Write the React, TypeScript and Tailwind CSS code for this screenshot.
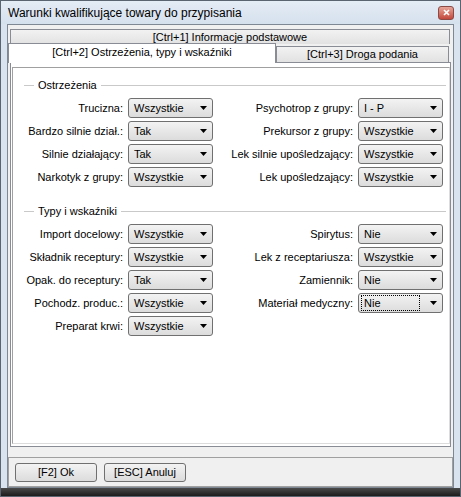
import React from "react";

const rowsA: [string, string, string, string][] = [
  ["Trucizna:", "Wszystkie", "Psychotrop z grupy:", "I - P"],
  ["Bardzo silnie dział.:", "Tak", "Prekursor z grupy:", "Wszystkie"],
  ["Silnie działający:", "Tak", "Lek silnie upośledzający:", "Wszystkie"],
  ["Narkotyk z grupy:", "Wszystkie", "Lek upośledzający:", "Wszystkie"],
];

const rowsB: [string, string, string?, string?][] = [
  ["Import docelowy:", "Wszystkie", "Spirytus:", "Nie"],
  ["Składnik receptury:", "Wszystkie", "Lek z receptariusza:", "Wszystkie"],
  ["Opak. do receptury:", "Tak", "Zamiennik:", "Nie"],
  ["Pochodz. produc.:", "Wszystkie", "Materiał medyczny:", "Nie"],
  ["Preparat krwi:", "Wszystkie"],
];

function Combo({ value, focus }: { value: string; focus?: boolean }) {
  return (
    <div className="w-[85px] h-[20px] rounded-[3px] border border-[#707070] bg-linear-to-b from-[#f3f3f3] to-[#dcdcdc] flex items-center pl-[2px] pr-[5px]">
      <span
        className={`flex-1 h-[16px] leading-[14px] pl-[2px] ${
          focus ? "border border-dotted border-black mr-[10px]" : "border border-transparent"
        }`}
      >
        {value}
      </span>
      <svg width="7" height="4" viewBox="0 0 7 4">
        <path d="M0 0h7L3.5 4z" fill="#000" />
      </svg>
    </div>
  );
}

function GroupHeader({ title }: { title: string }) {
  return (
    <div className="flex items-center h-[13px]">
      <div className="ml-[11px] w-[10px] border-t border-[#c9c9c9]" />
      <span className="px-[4px] leading-[13px]">{title}</span>
      <div className="flex-1 mr-[3px] border-t border-[#c9c9c9]" />
    </div>
  );
}

function Row({ l1, v1, l2, v2, focus }: { l1: string; v1: string; l2?: string; v2?: string; focus?: boolean }) {
  return (
    <div className="flex items-center">
      <span className="w-[110px] mr-[5px] text-right whitespace-nowrap">{l1}</span>
      <Combo value={v1} />
      {l2 && (
        <>
          <span className="w-[140px] mr-[5px] text-right whitespace-nowrap">{l2}</span>
          <Combo value={v2 || ""} focus={focus} />
        </>
      )}
    </div>
  );
}

export default function App() {
  return (
    <div className="w-[461px] h-[497px] flex flex-col bg-[#d8e3ef] border border-[#5a6470] font-['Liberation_Sans',Arial,sans-serif] text-[11px] text-black">
      {/* title bar */}
      <div className="h-[23px] flex items-center justify-between pl-[7px] pr-[6px] bg-linear-to-b from-[#e4ecf5] to-[#d6e1ee]">
        <span className="text-[12px]">Warunki kwalifikujące towary do przypisania</span>
        <div className="w-[16px] h-[14px] rounded-[3px] border border-[#8a4a45] bg-linear-to-b from-[#e6a59a] to-[#c2473c] flex items-center justify-center">
          <svg width="7" height="7" viewBox="0 0 7 7">
            <path d="M1 1l5 5M6 1L1 6" stroke="#fff" strokeWidth="1.6" />
          </svg>
        </div>
      </div>

      <div className="flex-1 flex flex-col mx-[6px] border border-[#7d8894] bg-[#f0f0f0]">
        {/* tabs */}
        <div className="pt-[4px]">
          <div className="h-[15px] ml-[2px] mr-[3px] border border-[#898c95] border-b-0 bg-linear-to-b from-[#f2f2f2] to-[#e2e2e2] flex items-center justify-center leading-[13px]">
            [Ctrl+1] Informacje podstawowe
          </div>
          <div className="flex items-end h-[20px] -mt-[1px] border-b border-[#898c95] mx-[2px]">
            <div className="-ml-[2px] w-[268px] h-[20px] -mb-[1px] border border-[#898c95] border-b-0 bg-white flex items-center justify-center pb-[2px] relative">
              [Ctrl+2] Ostrzeżenia, typy i wskaźniki
            </div>
            <div className="w-[173px] h-[16px] border border-[#898c95] border-b-0 bg-linear-to-b from-[#f2f2f2] to-[#e2e2e2] flex items-center justify-center">
              [Ctrl+3] Droga podania
            </div>
          </div>
        </div>

        {/* tab page */}
        <div className="flex-1 mx-[2px] mr-[2px] border border-t-0 border-[#898c95] bg-white pt-[4px] pl-[1px] pb-[2px] flex flex-col">
          <div className="flex-1 border border-[#a0a0a0] border-r-[#dcdcdc] border-b-[#dcdcdc] bg-white pt-[11px]">
            <GroupHeader title="Ostrzeżenia" />
            <div className="flex flex-col gap-[3px] mt-[6px]">
              {rowsA.map((r) => (
                <Row key={r[0]} l1={r[0]} v1={r[1]} l2={r[2]} v2={r[3]} />
              ))}
            </div>
            <div className="mt-[18px]">
              <GroupHeader title="Typy i wskaźniki" />
            </div>
            <div className="flex flex-col gap-[3px] mt-[6px]">
              {rowsB.map((r) => (
                <Row key={r[0]} l1={r[0]} v1={r[1]} l2={r[2]} v2={r[3]} focus={r[2] === "Materiał medyczny:"} />
              ))}
            </div>
          </div>
        </div>

        {/* button bar */}
        <div className="mt-[10px] h-[30px] border border-[#a0a0a0] flex items-center gap-[7px] pl-[6px]">
          <button className="w-[82px] h-[19px] rounded-[3px] border border-[#707070] bg-linear-to-b from-[#f3f3f3] to-[#dcdcdc] leading-[15px]">
            [F2] Ok
          </button>
          <button className="w-[82px] h-[19px] rounded-[3px] border border-[#707070] bg-linear-to-b from-[#f3f3f3] to-[#dcdcdc] leading-[15px]">
            [ESC] Anuluj
          </button>
        </div>
      </div>
      <div className="h-[8px] bg-linear-to-b from-[#4a4a4a] to-[#1c1c1c]" />
    </div>
  );
}
